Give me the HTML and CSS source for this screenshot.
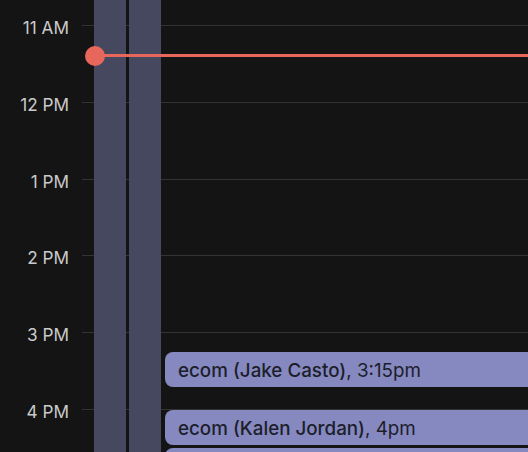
FILE: index.html
```html
<!DOCTYPE html>
<html>
<head>
<meta charset="utf-8">
<link rel="stylesheet" href="styles.css">
</head>
<body>
<div class="timeline">
  <div class="hour"><span class="label">11 AM</span><span class="rule"></span></div>
  <div class="hour"><span class="label">12 PM</span><span class="rule"></span></div>
  <div class="hour"><span class="label">1 PM</span><span class="rule"></span></div>
  <div class="hour"><span class="label">2 PM</span><span class="rule"></span></div>
  <div class="hour"><span class="label">3 PM</span><span class="rule"></span></div>
  <div class="hour"><span class="label">4 PM</span><span class="rule"></span></div>

  <div class="busy busy-a"></div>
  <div class="busy busy-b"></div>

  <div class="now"><span class="now-dot"></span></div>

  <div class="event" style="top: 351.7px"><span class="ev-title">ecom (Jake Casto)</span>, 3:15pm</div>
  <div class="event" style="top: 409.7px"><span class="ev-title">ecom (Kalen Jordan)</span>, 4pm</div>
  <div class="event" style="top: 448.1px"></div>
</div>
</body>
</html>
```
FILE: styles.css
```css
html, body {
  margin: 0;
  padding: 0;
  background: #141414;
  overflow: hidden;
}

body {
  width: 528px;
  height: 452px;
  font-family: Inter, "Noto Sans", sans-serif;
}

.timeline {
  position: relative;
  height: 452px;
  padding-top: 25px;
  box-sizing: border-box;
  overflow: hidden;
}

.hour {
  display: flex;
  height: 76.8px;
}

.label {
  width: 69px;
  flex: none;
  margin-top: -8px;
  height: 21px;
  line-height: 21px;
  text-align: right;
  font-size: 17.2px;
  color: #cacaca;
}

.rule {
  flex: 1;
  margin-left: 13px;
  border-top: 1px solid #333333;
  height: 0;
}

.busy {
  position: absolute;
  top: 0;
  bottom: 0;
  width: 32px;
  background: #464860;
}

.busy-a { left: 94px; }
.busy-b { left: 129px; }

.now {
  position: absolute;
  left: 95px;
  right: 0;
  top: 54px;
  height: 3px;
  background: #e8675c;
}

.now-dot {
  position: absolute;
  left: -10px;
  top: -8.5px;
  width: 20px;
  height: 20px;
  border-radius: 50%;
  background: #e8675c;
}

.event {
  position: absolute;
  left: 165px;
  right: -20px;
  height: 35px;
  box-sizing: border-box;
  padding-left: 13px;
  line-height: 37px;
  border-radius: 8px;
  background: #8589c0;
  color: #1d1e2b;
  font-size: 18.8px;
  white-space: nowrap;
}

.ev-title {
  font-weight: 450;
}
```
